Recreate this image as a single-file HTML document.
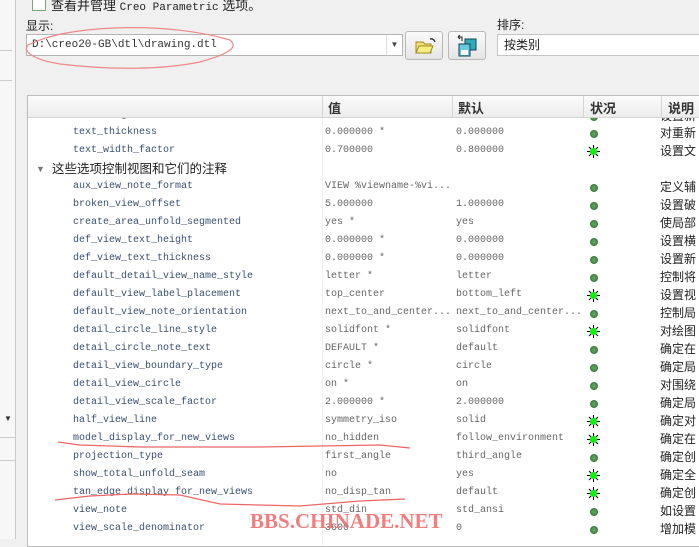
<!DOCTYPE html>
<html><head><meta charset="utf-8"><style>
body{margin:0;width:699px;height:539px;overflow:hidden;background:#f0f0f0;position:relative;font-family:"Liberation Sans","Noto Sans CJK SC",sans-serif;}
.a{position:absolute;}
.tbl{position:absolute;left:27px;top:95px;width:680px;height:450px;background:#fff;border:1px solid #bcbcbc;overflow:hidden;}
.hdr{position:absolute;left:0;top:0;width:700px;height:21px;background:linear-gradient(#fbfbfb,#ececec);border-bottom:1px solid #d5d5d5;z-index:3;font-size:13px;font-weight:bold;color:#333;}
.hdr span{position:absolute;top:2px;}
.vl{position:absolute;top:0;width:1px;height:21px;background:#d5d5d5;}
.r{position:absolute;left:0;width:700px;height:18px;line-height:18px;font-family:"Liberation Mono",monospace;font-size:10px;color:#666;white-space:nowrap;}
.r .n{position:absolute;left:45px;color:#3a5070;}
.r .v{position:absolute;left:297px;}
.r .d{position:absolute;left:428px;}
.r .s{position:absolute;left:632px;font-family:"Liberation Sans","Noto Sans CJK SC",sans-serif;font-size:12px;color:#222;}
.g{position:absolute;left:562px;top:6px;width:8px;height:8px;border-radius:50%;background:radial-gradient(#6a6,#286a28);}
.st{position:absolute;left:559px;top:3px;width:13px;height:13px;}
.colline{position:absolute;top:21px;left:294px;width:1px;height:440px;background:#f0f0f0;}
</style></head><body>
<svg width="0" height="0" style="position:absolute"><defs><symbol id="sx" viewBox="0 0 13 13"><path d="M6.5 0v13M0 6.5h13M2 2l9 9M11 2l-9 9" stroke="#000" stroke-width="1"/><circle cx="6.5" cy="6.5" r="3.6" fill="#10f010"/></symbol></defs></svg>
<div class="a" style="left:0;top:0;width:15px;height:539px;background:#f7f7f7;border-right:1px solid #c8c8c8"></div>
<div class="a" style="left:0;top:50px;width:12px;height:1px;background:#ccc"></div>
<div class="a" style="left:0;top:80px;width:12px;height:1px;background:#ccc"></div>
<div class="a" style="left:0;top:437px;width:15px;height:1px;background:#ccc"></div>
<div class="a" style="left:0;top:460px;width:15px;height:1px;background:#ccc"></div>
<div class="a" style="left:4px;top:414px;font-size:8px;color:#333">▼</div>
<div class="a" style="left:32px;top:-3px;width:12px;height:12px;border:1px solid #7a7;background:#fff"></div>
<div class="a" style="left:51px;top:-5px;font-size:13px;color:#222">查看并管理 <span style="font-family:'Liberation Mono',monospace;font-size:11px">Creo Parametric</span> 选项。</div>
<div class="a" style="left:26px;top:17px;font-size:12px;color:#222">显示:</div>
<div class="a" style="left:26px;top:34px;width:375px;height:20px;background:#fff;border:1px solid #b5b5b5;font-family:'Liberation Mono',monospace;font-size:11px;line-height:20px;color:#333;text-indent:5px">D:\creo20-GB\dtl\drawing.dtl</div>
<div class="a" style="left:386px;top:35px;width:15px;height:20px;border-left:1px solid #ddd;font-size:8px;line-height:20px;text-align:center;color:#444">▼</div>
<div class="a" style="left:405px;top:31px;width:36px;height:27px;border:1px solid #b8b8b8;border-radius:3px;background:linear-gradient(#fafafa,#e5e5e5)">
<svg width="36" height="27"><path d="M10 10h7l2 2h6v9H10z" fill="#f0e070" stroke="#a08a20"/><path d="M10 21l3-7h14l-3 7z" fill="#f8ee80" stroke="#a08a20"/><path d="M24 7a4 4 0 0 1 5 3" fill="none" stroke="#222" stroke-width="1.3"/></svg></div>
<div class="a" style="left:448px;top:31px;width:36px;height:27px;border:1px solid #b8b8b8;border-radius:3px;background:linear-gradient(#fafafa,#e5e5e5)">
<svg width="36" height="27"><rect x="16" y="7" width="11" height="11" fill="#3ab" stroke="#145"/><rect x="10" y="12" width="11" height="12" fill="#6cd" stroke="#145"/><rect x="12" y="18" width="7" height="5" fill="#fff"/><path d="M13 9V5h-4M9 5l2-2M9 5l2 2" stroke="#222" fill="none"/></svg></div>
<div class="a" style="left:497px;top:16px;font-size:12px;color:#222">排序:</div>
<div class="a" style="left:497px;top:34px;width:210px;height:20px;background:#fff;border:1px solid #c5c5c5;font-size:12px;line-height:20px;text-indent:6px;color:#222">按类别</div>

<div class="tbl">
<div class="hdr">
<span style="left:300px">值</span><span style="left:430px">默认</span><span style="left:562px">状况</span><span style="left:640px">说明</span>
<div class="vl" style="left:294px"></div><div class="vl" style="left:424px"></div><div class="vl" style="left:555px"></div><div class="vl" style="left:633px"></div>
</div>
<div class="colline"></div>
<div class="r" style="top:11px"><span class="n">text_height</span><span class="v">0.000000</span><span class="d">0.000000</span><i class="g"></i><span class="s">设置新</span></div>
<div class="r" style="top:28px"><span class="n">text_thickness</span><span class="v">0.000000 *</span><span class="d">0.000000</span><i class="g"></i><span class="s">对重新</span></div>
<div class="r" style="top:46px"><span class="n">text_width_factor</span><span class="v">0.700000</span><span class="d">0.800000</span><svg class="st"><use href="#sx"/></svg><span class="s">设置文</span></div>
<div class="r" style="top:64px;font-family:'Liberation Sans','Noto Sans CJK SC',sans-serif;font-size:12.5px;color:#222"><span style="position:absolute;left:8px;font-size:9px;color:#777">▼</span><span style="position:absolute;left:24px">这些选项控制视图和它们的注释</span></div>
<div class="r" style="top:82px"><span class="n">aux_view_note_format</span><span class="v">VIEW %viewname-%vi...</span><i class="g"></i><span class="s">定义辅</span></div>
<div class="r" style="top:100px"><span class="n">broken_view_offset</span><span class="v">5.000000</span><span class="d">1.000000</span><i class="g"></i><span class="s">设置破</span></div>
<div class="r" style="top:118px"><span class="n">create_area_unfold_segmented</span><span class="v">yes *</span><span class="d">yes</span><i class="g"></i><span class="s">使局部</span></div>
<div class="r" style="top:136px"><span class="n">def_view_text_height</span><span class="v">0.000000 *</span><span class="d">0.000000</span><i class="g"></i><span class="s">设置横</span></div>
<div class="r" style="top:154px"><span class="n">def_view_text_thickness</span><span class="v">0.000000 *</span><span class="d">0.000000</span><i class="g"></i><span class="s">设置新</span></div>
<div class="r" style="top:172px"><span class="n">default_detail_view_name_style</span><span class="v">letter *</span><span class="d">letter</span><i class="g"></i><span class="s">控制将</span></div>
<div class="r" style="top:190px"><span class="n">default_view_label_placement</span><span class="v">top_center</span><span class="d">bottom_left</span><svg class="st"><use href="#sx"/></svg><span class="s">设置视</span></div>
<div class="r" style="top:208px"><span class="n">default_view_note_orientation</span><span class="v">next_to_and_center...</span><span class="d">next_to_and_center...</span><i class="g"></i><span class="s">控制局</span></div>
<div class="r" style="top:226px"><span class="n">detail_circle_line_style</span><span class="v">solidfont *</span><span class="d">solidfont</span><svg class="st"><use href="#sx"/></svg><span class="s">对绘图</span></div>
<div class="r" style="top:244px"><span class="n">detail_circle_note_text</span><span class="v">DEFAULT *</span><span class="d">default</span><i class="g"></i><span class="s">确定在</span></div>
<div class="r" style="top:262px"><span class="n">detail_view_boundary_type</span><span class="v">circle *</span><span class="d">circle</span><i class="g"></i><span class="s">确定局</span></div>
<div class="r" style="top:280px"><span class="n">detail_view_circle</span><span class="v">on *</span><span class="d">on</span><i class="g"></i><span class="s">对围绕</span></div>
<div class="r" style="top:298px"><span class="n">detail_view_scale_factor</span><span class="v">2.000000 *</span><span class="d">2.000000</span><i class="g"></i><span class="s">确定局</span></div>
<div class="r" style="top:316px"><span class="n">half_view_line</span><span class="v">symmetry_iso</span><span class="d">solid</span><svg class="st"><use href="#sx"/></svg><span class="s">确定对</span></div>
<div class="r" style="top:334px"><span class="n">model_display_for_new_views</span><span class="v">no_hidden</span><span class="d">follow_environment</span><svg class="st"><use href="#sx"/></svg><span class="s">确定在</span></div>
<div class="r" style="top:352px"><span class="n">projection_type</span><span class="v">first_angle</span><span class="d">third_angle</span><i class="g"></i><span class="s">确定创</span></div>
<div class="r" style="top:370px"><span class="n">show_total_unfold_seam</span><span class="v">no</span><span class="d">yes</span><svg class="st"><use href="#sx"/></svg><span class="s">确定全</span></div>
<div class="r" style="top:388px"><span class="n">tan_edge_display_for_new_views</span><span class="v">no_disp_tan</span><span class="d">default</span><svg class="st"><use href="#sx"/></svg><span class="s">确定创</span></div>
<div class="r" style="top:406px"><span class="n">view_note</span><span class="v">std_din</span><span class="d">std_ansi</span><i class="g"></i><span class="s">如设置</span></div>
<div class="r" style="top:424px"><span class="n">view_scale_denominator</span><span class="v">3600</span><span class="d">0</span><i class="g"></i><span class="s">增加模</span></div>
</div>

<svg class="a" style="left:0;top:0" width="699" height="539">
<path d="M40 40C80 25 170 22 230 40C240 48 225 55 200 62C160 70 110 70 60 64C35 60 22 52 28 45Z" fill="none" stroke="#e88" stroke-width="1.2"/>
<path d="M58 442L80 445L140 447L260 447L380 445L410 448" fill="none" stroke="#e66" stroke-width="1.3"/>
<path d="M55 500L90 496L130 494L180 495L220 504L300 506L360 501L405 499" fill="none" stroke="#e66" stroke-width="1.3"/>
<text x="250" y="528" font-family="Liberation Serif,serif" font-weight="bold" font-size="21" fill="#f07070" opacity="0.9">BBS.CHINADE.NET</text>
</svg>
</body></html>
